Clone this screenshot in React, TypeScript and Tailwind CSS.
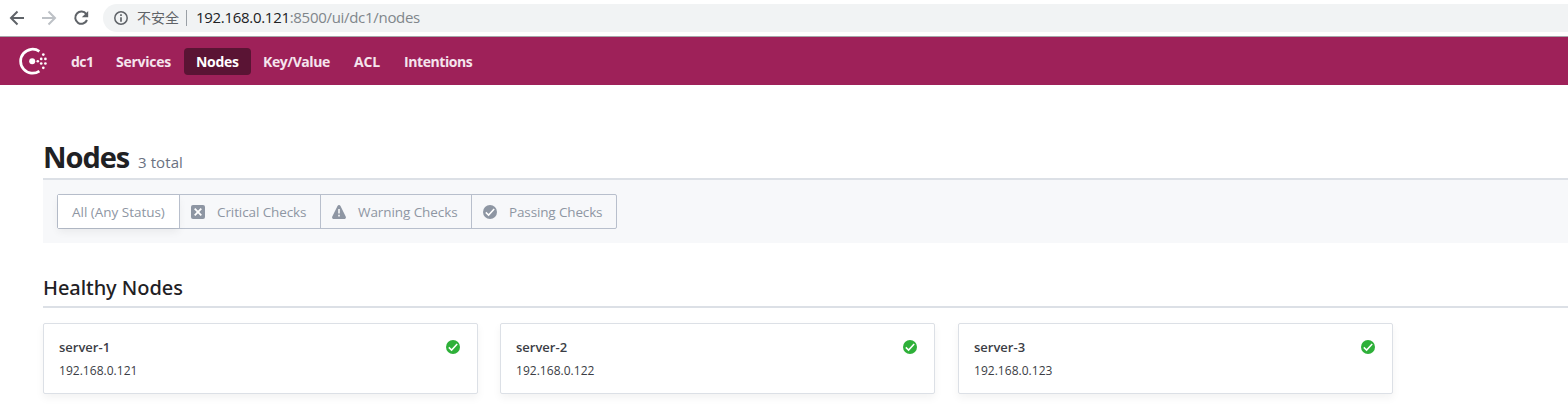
import type { ReactNode } from "react";

const navItems = [
  { label: "dc1", box: "w-[45px]", text: "tracking-[-0.5px]" },
  { label: "Services", box: "w-[80px]", text: "tracking-[-0.25px]" },
  { label: "Nodes", box: "w-[67px]", text: "tracking-[-0.3px]", active: true },
  { label: "Key/Value", box: "w-[91px]", text: "tracking-[-0.42px]" },
  { label: "ACL", box: "w-[50px]", text: "tracking-[-0.2px]" },
  { label: "Intentions", box: "w-[92px]", text: "tracking-[-0.42px]" },
];

const nodes = [
  { name: "server-1", address: "192.168.0.121", margin: "" },
  { name: "server-2", address: "192.168.0.122", margin: "ml-[22px]" },
  { name: "server-3", address: "192.168.0.123", margin: "ml-[23px]" },
];

function CheckCircle({ className }: { className: string }) {
  return (
    <svg viewBox="0 0 14 14" className={className}>
      <circle cx="7" cy="7" r="7" fill="currentColor" />
      <path d="M2.8 7.4 5.6 10.1 11.2 4" fill="none" stroke="#fff" strokeWidth="1.5" />
    </svg>
  );
}

function CrossSquare() {
  return (
    <svg viewBox="0 0 14 14" className="size-3.5">
      <rect width="14" height="14" rx="2" fill="currentColor" />
      <path d="m3.7 3.7 6.6 6.6M10.3 3.7l-6.6 6.6" stroke="#fff" strokeWidth="1.8" />
    </svg>
  );
}

function WarningTriangle() {
  return (
    <svg viewBox="0 0 14 14" className="size-3.5">
      <path
        d="M5.5 1C6.1-.2 7.9-.2 8.5 1l5.2 10.6c.6 1.2-.1 2.4-1.4 2.4H1.7C.4 14-.3 12.8.3 11.6Z"
        fill="currentColor"
      />
      <path d="M7 4v4.6M7 9.7v1.8" stroke="#fff" strokeWidth="1.5" />
    </svg>
  );
}

function ConsulLogo() {
  return (
    <svg viewBox="0 0 28 28" className="size-7 text-white" fill="currentColor">
      <path d="M20.4 4.3A12 12 0 1 0 20.4 24.1" fill="none" stroke="currentColor" strokeWidth="2.7" />
      <circle cx="13.2" cy="14.2" r="3" />
      <circle cx="18.8" cy="14.2" r="1.3" />
      <circle cx="22.2" cy="11.9" r="1.35" />
      <circle cx="22.2" cy="16.5" r="1.35" />
      <circle cx="24.3" cy="7.6" r="1.35" />
      <circle cx="26.4" cy="11.9" r="1.35" />
      <circle cx="26.4" cy="16.5" r="1.35" />
      <circle cx="24.3" cy="20.8" r="1.35" />
    </svg>
  );
}

function BrowserBar() {
  return (
    <header className="flex h-[37px] items-start border-b border-[#a5a6a9] bg-white text-[#5f6368]">
      <svg viewBox="0 0 103 36" className="h-9 w-[103px] shrink-0" fill="none" strokeWidth="2">
        <path d="M24 18H11M17.5 11.5 11 18l6.5 6.5" stroke="#5f6368" />
        <path d="M42 18h13M48.5 11.5 55 18l-6.5 6.5" stroke="#bdc1c6" />
        <path d="M86.3 14.1A6.1 6.1 0 1 0 87 20" stroke="#5f6368" />
        <path d="M88.2 11v6.3h-6.4Z" fill="#5f6368" />
      </svg>
      <div className="mt-1 flex h-7 flex-1 items-center rounded-l-full bg-[#f1f3f4] pl-[11px]">
        <svg viewBox="0 0 14 14" className="size-3.5" fill="none" stroke="#5f6368">
          <circle cx="7" cy="7" r="6.2" strokeWidth="1.5" />
          <path d="M7 3.3v1.6M7 6.2v4.5" strokeWidth="1.7" />
        </svg>
        <span className="ml-[9px] h-6 w-[43px] text-[14px] leading-[22px] whitespace-nowrap font-['Noto_Sans_CJK_SC',sans-serif]">
          不安全
        </span>
        <span className="ml-[6px] h-4 w-px bg-[#9aa0a6]" />
        <span className="-mt-[2px] ml-[9px] text-[15px] tracking-[-0.3px] whitespace-nowrap text-[#80868b]">
          <span className="text-[#202124]">192.168.0.121</span>:8500/ui/dc1/nodes
        </span>
      </div>
    </header>
  );
}

function Filter({ width, icon, label, tracking }: { width: string; icon: ReactNode; label: string; tracking: string }) {
  return (
    <button className={`flex h-full items-center border-l border-[#b8bfcc] pl-[11px] ${width}`}>
      {icon}
      <span className={`ml-3 h-5 leading-[21px] whitespace-nowrap ${tracking}`}>{label}</span>
    </button>
  );
}

export default function App() {
  return (
    <div className="h-[405px] overflow-hidden bg-white font-['Open_Sans','Noto_Sans_CJK_SC',sans-serif]">
      <BrowserBar />
      <nav className="flex h-12 items-center bg-[#9e2159] pl-[19px]">
        <ConsulLogo />
        <ul className="ml-3 flex text-[14px] font-bold text-[#f5e4ed]">
          {navItems.map((item) => (
            <li
              key={item.label}
              className={`flex h-[27px] items-center rounded px-3 whitespace-nowrap ${item.box} ${item.text} ${item.active ? "bg-[#5a1434] text-white" : ""}`}
            >
              {item.label}
            </li>
          ))}
        </ul>
      </nav>
      <main className="pl-[43px]">
        <div className="flex h-[95px] items-end border-b-2 border-[#dce0e6]">
          <h1 className="h-[42px] w-[87px] text-[29px] leading-[41px] font-bold tracking-[-1.05px] text-[#1f2124]">Nodes</h1>
          <span className="ml-[8px] h-[28px] text-[15px] leading-[24px] tracking-[0.1px] text-[#6a7181]">3 total</span>
        </div>
        <div className="h-[63px] bg-[#f7f8fa] pt-[14px] pl-[14px]">
          <div className="flex h-[35px] w-[560px] rounded-[2px] border border-[#b8bfcc] text-[13.5px] text-[#8e96a3]">
            <button className="h-full w-[121px] bg-white pt-px pl-[14px] text-left tracking-[-0.02px] whitespace-nowrap shadow-[0_4px_8px_rgba(0,0,0,0.06)]">
              All (Any Status)
            </button>
            <Filter width="w-[141px]" icon={<CrossSquare />} label="Critical Checks" tracking="tracking-[-0.1px]" />
            <Filter width="w-[151px]" icon={<WarningTriangle />} label="Warning Checks" tracking="tracking-[-0.08px]" />
            <Filter width="w-[145px]" icon={<CheckCircle className="size-3.5" />} label="Passing Checks" tracking="tracking-[-0.14px]" />
          </div>
        </div>
        <h2 className="mt-[30px] h-[35px] border-b-2 border-[#dce0e6] text-[20px] leading-[29px] font-medium tracking-[-0.06px] text-[#1f2124] font-['Noto_Sans',sans-serif]">
          Healthy Nodes
        </h2>
        <div className="mt-[15px] flex">
          {nodes.map((node) => (
            <article
              key={node.name}
              className={`flex h-[71px] w-[435px] justify-between rounded-[2px] border border-[#dce0e6] bg-white pt-[13px] pr-[17px] pl-[15px] shadow-[0_4px_8px_rgba(0,0,0,0.05)] ${node.margin}`}
            >
              <div>
                <h3 className="text-[13px] leading-[20px] font-semibold text-[#3b3d45]">{node.name}</h3>
                <p className="mt-[4px] text-[12px] leading-[20px] tracking-[0.03px] text-[#3b3d45]">{node.address}</p>
              </div>
              <CheckCircle className="mt-[3px] size-3.5 text-[#2eb039]" />
            </article>
          ))}
        </div>
      </main>
    </div>
  );
}
